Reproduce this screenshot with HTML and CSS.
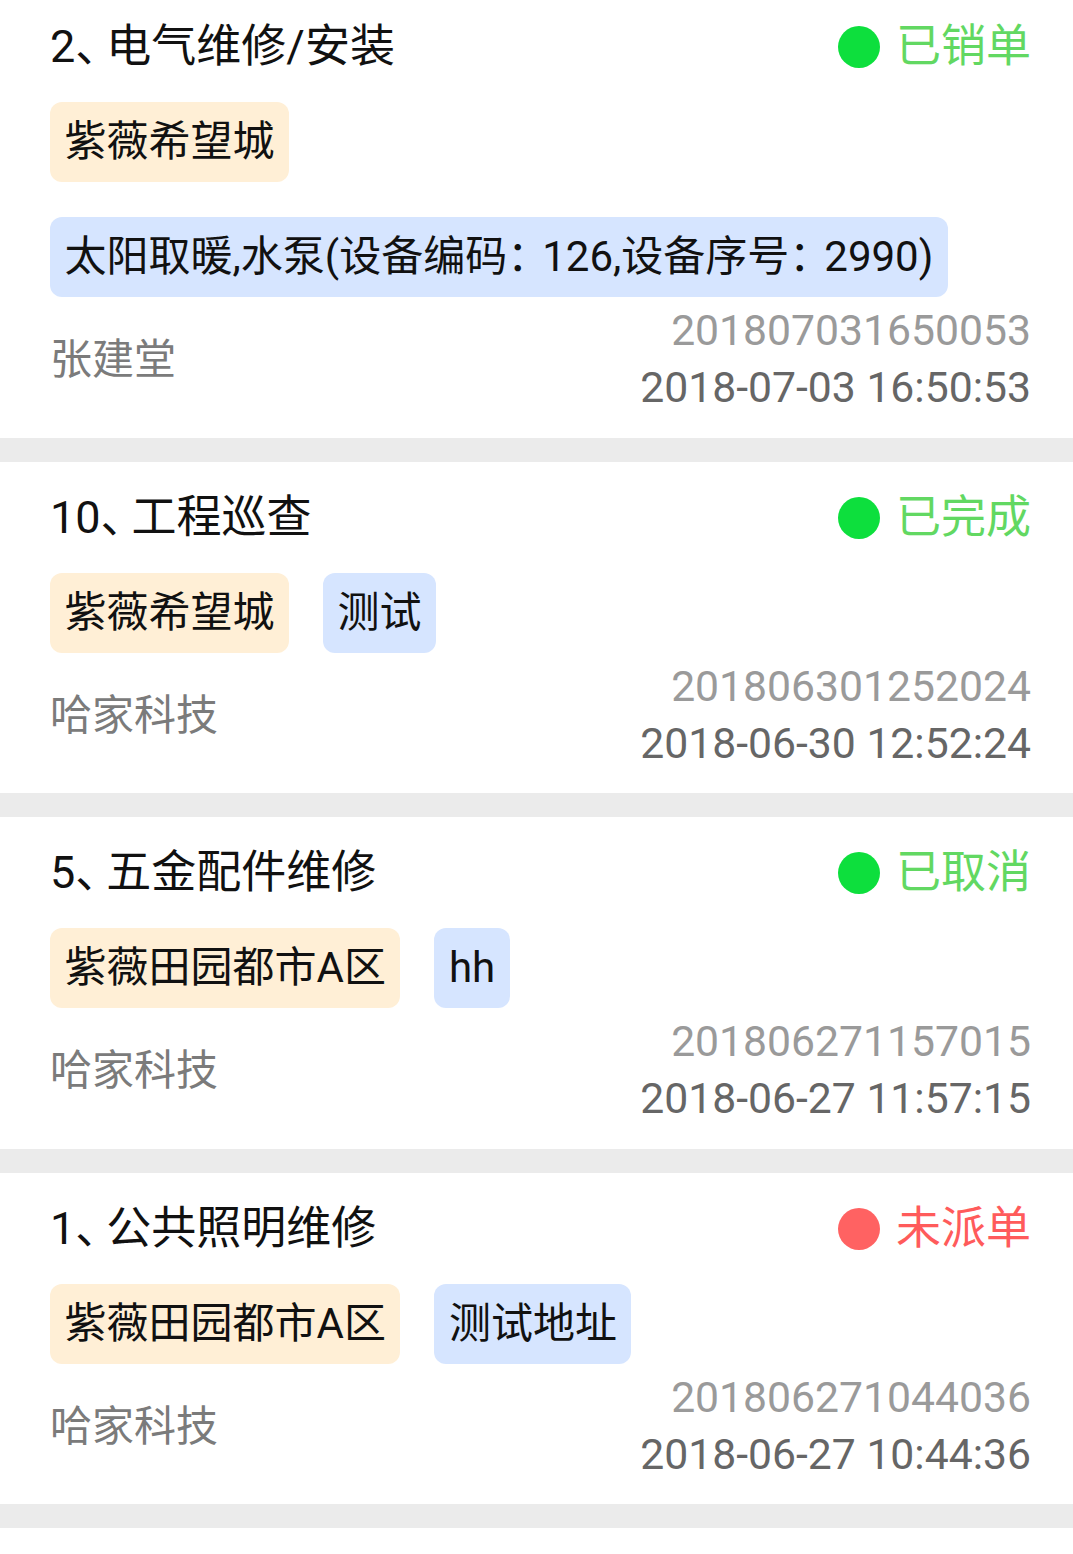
FILE: index.html
```html
<!DOCTYPE html>
<html lang="zh-CN">
<head>
<meta charset="utf-8">
<title>工单列表</title>
<link rel="stylesheet" href="styles.css">
</head>
<body>
<div class="list">
  <div class="card">
    <div class="head">
      <div class="title">2<span class="sep">、</span>电气维修/安装</div>
      <div class="status done"><span class="dot"></span><span class="label">已销单</span></div>
    </div>
    <div class="tags">
      <span class="tag tag-place">紫薇希望城</span>
      <span class="tag tag-info">太阳取暖,水泵(设备编码<span class="colon">：</span>126,设备序号<span class="colon">：</span>2990)</span>
    </div>
    <div class="foot">
      <div class="name">张建堂</div>
      <div class="meta">
        <div class="no">201807031650053</div>
        <div class="time">2018-07-03 16:50:53</div>
      </div>
    </div>
  </div>

  <div class="card">
    <div class="head">
      <div class="title">10<span class="sep">、</span>工程巡查</div>
      <div class="status done"><span class="dot"></span><span class="label">已完成</span></div>
    </div>
    <div class="tags">
      <span class="tag tag-place">紫薇希望城</span>
      <span class="tag tag-info">测试</span>
    </div>
    <div class="foot">
      <div class="name">哈家科技</div>
      <div class="meta">
        <div class="no">201806301252024</div>
        <div class="time">2018-06-30 12:52:24</div>
      </div>
    </div>
  </div>

  <div class="card">
    <div class="head">
      <div class="title">5<span class="sep">、</span>五金配件维修</div>
      <div class="status done"><span class="dot"></span><span class="label">已取消</span></div>
    </div>
    <div class="tags">
      <span class="tag tag-place">紫薇田园都市A区</span>
      <span class="tag tag-info">hh</span>
    </div>
    <div class="foot">
      <div class="name">哈家科技</div>
      <div class="meta">
        <div class="no">201806271157015</div>
        <div class="time">2018-06-27 11:57:15</div>
      </div>
    </div>
  </div>

  <div class="card">
    <div class="head">
      <div class="title">1<span class="sep">、</span>公共照明维修</div>
      <div class="status todo"><span class="dot"></span><span class="label">未派单</span></div>
    </div>
    <div class="tags">
      <span class="tag tag-place">紫薇田园都市A区</span>
      <span class="tag tag-info">测试地址</span>
    </div>
    <div class="foot">
      <div class="name">哈家科技</div>
      <div class="meta">
        <div class="no">201806271044036</div>
        <div class="time">2018-06-27 10:44:36</div>
      </div>
    </div>
  </div>
</div>
</body>
</html>
```

FILE: styles.css
```css
html, body {
  margin: 0;
  padding: 0;
  background: #ffffff;
}

body {
  font-family: Roboto, "Noto Sans CJK SC", "Noto Sans", sans-serif;
  font-size: 42px;
  color: #111111;
  overflow: hidden;
}

.list {
  margin-top: -9px;
  background: #ebebeb;
  display: flex;
  flex-direction: column;
  gap: 24px;
  padding-bottom: 24px;
}

.card {
  background: #ffffff;
  padding: 28px 42px 21.5px 50px;
}

.head {
  display: flex;
  justify-content: space-between;
  align-items: center;
  height: 56px;
}

.title {
  font-size: 45px;
  line-height: 56px;
  color: #111111;
  white-space: nowrap;
}

.sep {
  letter-spacing: -14px;
}

.status {
  display: flex;
  align-items: center;
  font-size: 45px;
  line-height: 56px;
}

.dot {
  width: 42px;
  height: 42px;
  border-radius: 50%;
  margin-right: 16px;
}

.status.done .dot { background: #0ddf3d; }
.status.done .label { color: #62d862; }
.status.todo .dot { background: #ff6262; }
.status.todo .label { color: #ff5b5b; }

.tags {
  display: flex;
  flex-wrap: wrap;
  gap: 35px 34px;
  margin-top: 27px;
}

.tag {
  height: 80px;
  line-height: 80px;
  padding: 0 14.5px;
  border-radius: 12px;
  color: #111111;
  white-space: nowrap;
}

.colon {
  letter-spacing: -7px;
}

.tag-place { background: #ffefd6; }
.tag-info { background: #d6e5ff; }

.foot {
  display: flex;
  justify-content: space-between;
  align-items: center;
  margin-top: 5px;
}

.name {
  color: #7b7b7b;
  padding-bottom: 7px;
}

.meta {
  text-align: right;
  font-size: 42.7px;
  line-height: 57px;
}

.no { color: #9a9a9a; }
.time { color: #666666; }
```
